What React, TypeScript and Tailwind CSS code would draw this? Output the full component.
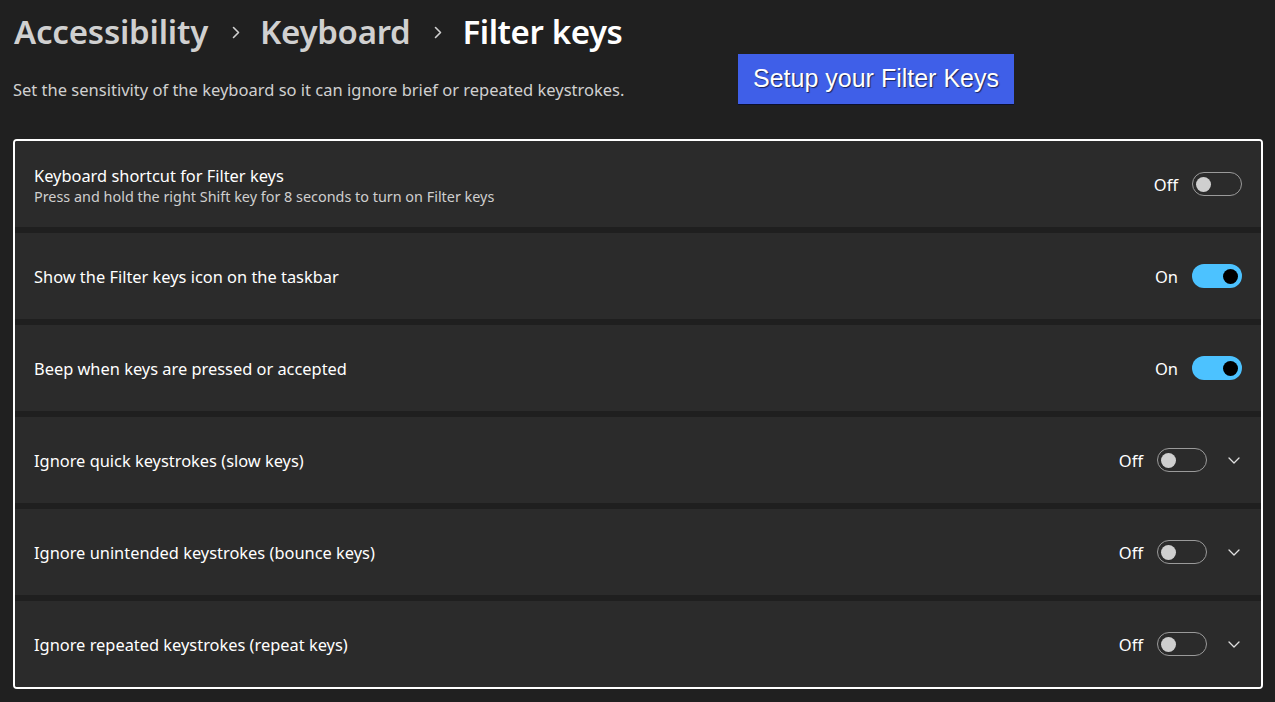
import React from "react";

const font = { fontFamily: '"Noto Sans", "Open Sans", sans-serif' };

function Toggle({ on }: { on: boolean }) {
  return on ? (
    <div className="w-[50px] h-[24px] rounded-full bg-[#4cc2ff] flex items-center justify-end pr-[4px]">
      <div className="w-[15px] h-[15px] rounded-full bg-black" />
    </div>
  ) : (
    <div className="w-[50px] h-[24px] rounded-full border border-[#9a9a9a] flex items-center pl-[3px]">
      <div className="w-[15px] h-[15px] rounded-full bg-[#cfcfcf]" />
    </div>
  );
}

function Chevron() {
  return (
    <svg width="16" height="16" viewBox="0 0 16 16" className="text-[#e0e0e0]">
      <path d="M3 6 L8 11 L13 6" fill="none" stroke="currentColor" strokeWidth="1.3" strokeLinecap="round" strokeLinejoin="round" />
    </svg>
  );
}

function Crumb({ first }: { first?: boolean }) {
  return (
    <svg
      width="8"
      height="13"
      viewBox="0 0 8 13"
      className={first ? "ml-[24px] mr-[20px] text-[#d0d0d0]" : "ml-[24px] mr-[20px] text-[#d0d0d0]"}
    >
      <path d="M1.5 1.5 L6.5 6.5 L1.5 11.5" fill="none" stroke="currentColor" strokeWidth="1.6" strokeLinecap="round" strokeLinejoin="round" />
    </svg>
  );
}

type Row = { title: string; sub?: string; on: boolean; chevron?: boolean };

const rows: Row[] = [
  { title: "Keyboard shortcut for Filter keys", sub: "Press and hold the right Shift key for 8 seconds to turn on Filter keys", on: false },
  { title: "Show the Filter keys icon on the taskbar", on: true },
  { title: "Beep when keys are pressed or accepted", on: true },
  { title: "Ignore quick keystrokes (slow keys)", on: false, chevron: true },
  { title: "Ignore unintended keystrokes (bounce keys)", on: false, chevron: true },
  { title: "Ignore repeated keystrokes (repeat keys)", on: false, chevron: true },
];

export default function App() {
  return (
    <div className="w-[1275px] h-[702px] bg-[#202020] overflow-hidden text-white" style={font}>
      <div className="pl-[14px] pt-[8px] flex items-center h-[56px]">
        <span className="text-[33px] font-semibold text-[#d0d0d0] tracking-[-0.2px]">Accessibility</span>
        <Crumb first />
        <span className="text-[33px] font-semibold text-[#d0d0d0] tracking-[-0.3px]">Keyboard</span>
        <Crumb />
        <span className="text-[33px] font-semibold text-white tracking-[-0.4px]">Filter keys</span>
      </div>
      <div className="flex items-start h-[77px]">
        <div className="pl-[13px] pt-[22px] text-[16.5px] leading-[24px] text-[#d0d0d0] w-[738px]">
          Set the sensitivity of the keyboard so it can ignore brief or repeated keystrokes.
        </div>
        <div
          className="mt-[-2px] w-[276px] h-[50px] bg-[#3f5fe8] flex items-center justify-center text-[25px] text-white shadow-[0_1px_0_#0a0f30]"
          style={{ fontFamily: '"Liberation Sans", Arial, sans-serif', textShadow: "1px 1px 1px rgba(0,0,0,0.6)" }}
        >
          Setup your Filter Keys
        </div>
      </div>
      <div className="ml-[13px] mt-[6px] w-[1250px] h-[550px] border-2 border-white rounded-[4px] bg-[#1f1f1f] flex flex-col gap-[6px] overflow-hidden">
        {rows.map((r, i) => (
          <div key={i} className="h-[86px] shrink-0 bg-[#2b2b2b] flex items-center pl-[19px] pr-[19px]">
            <div className={r.sub ? "flex-1 flex flex-col pt-[4px]" : "flex-1 flex flex-col pt-[2px]"}>
              <div className="text-[16.4px] text-white leading-[22px]">{r.title}</div>
              {r.sub && <div className="text-[14.4px] text-[#cfcfcf] leading-[20px]">{r.sub}</div>}
            </div>
            <span className="text-[16.5px] text-white mr-[14px] pt-[2px]">{r.on ? "On" : "Off"}</span>
            <Toggle on={r.on} />
            {r.chevron && (
              <div className="ml-[19px]">
                <Chevron />
              </div>
            )}
          </div>
        ))}
      </div>
    </div>
  );
}
